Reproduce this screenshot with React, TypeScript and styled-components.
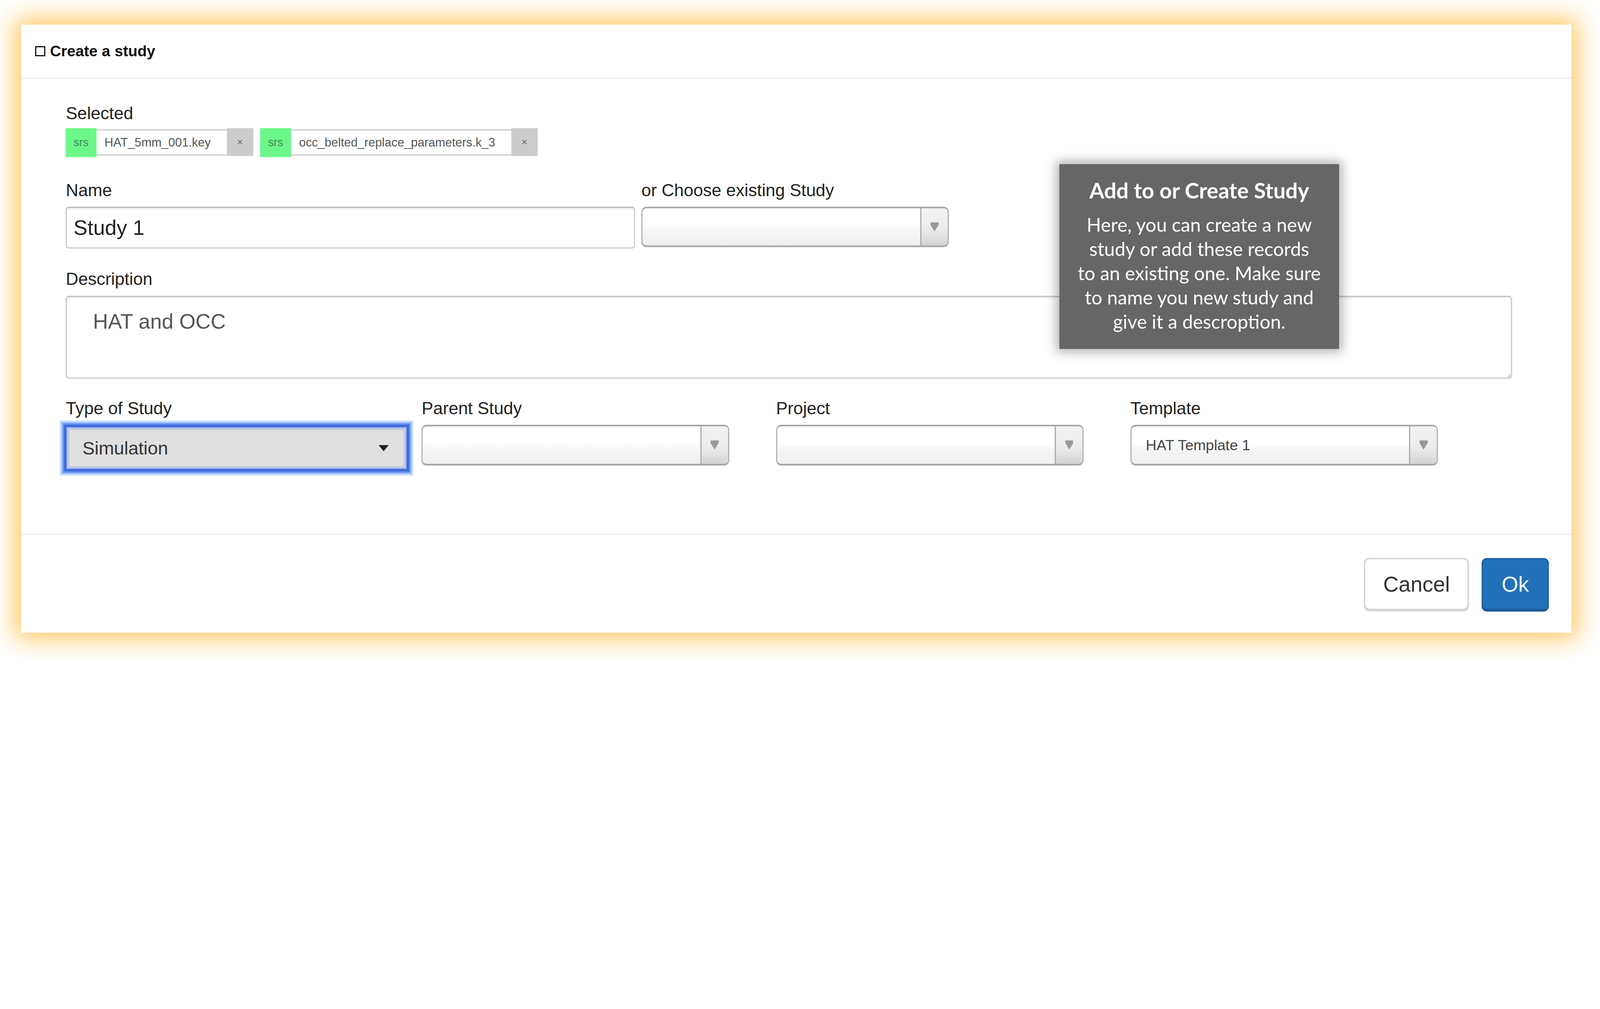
import styled, { createGlobalStyle } from "styled-components";

const GlobalStyle = createGlobalStyle`
  html, body {
    margin: 0;
    padding: 0;
    background: #fff;
    overflow: hidden;
  }
  body {
    font-family: "Liberation Sans", Arial, sans-serif;
    color: #333;
  }
  * {
    box-sizing: border-box;
  }
`;

// layout is written at the 1x size of the capture; the page is zoomed to fit the window
const BASE_WIDTH = 1569;
const BASE_HEIGHT = 645.5;

const Page = styled.div`
  width: ${BASE_WIDTH}px;
  height: ${BASE_HEIGHT}px;
  padding: 24px 0 0 20.5px;
  overflow: hidden;
`;

const Dialog = styled.section`
  position: relative;
  width: 1520.5px;
  height: 596px;
  background: #fff;
  box-shadow: 0 0 22px 6px #ffc965;
  display: flex;
  flex-direction: column;
`;

const Header = styled.header`
  height: 53px;
  flex-shrink: 0;
  padding-left: 14px;
  border-bottom: 1px solid #e5e5e5;
  display: flex;
  align-items: center;
  gap: 4.5px;
  font-size: 15px;
  font-weight: 700;
  color: #111;
`;

const IconBox = styled.span`
  width: 10px;
  height: 10px;
  border: 1.5px solid #111;
`;

const Body = styled.div`
  flex: 1;
  padding: 24px 58px 0 44px;
  border-bottom: 1px solid #e5e5e5;
  display: flex;
  flex-direction: column;
`;

const Label = styled.label`
  display: block;
  font-size: 17px;
  line-height: 20px;
  color: #222;
`;

const Tags = styled.div`
  margin-top: 4.5px;
  display: flex;
  gap: 6.5px;
`;

const Tag = styled.div`
  display: flex;
  align-items: center;
  height: 28.5px;
`;

const TagKind = styled.span`
  width: 30px;
  height: 28.5px;
  background: #6cf889;
  color: #3f8a52;
  font-size: 11px;
  display: flex;
  align-items: center;
  justify-content: center;
`;

const TagName = styled.span`
  height: 25.7px;
  padding: 0 16px 0 8px;
  border-top: 1.25px solid #ccc;
  border-bottom: 1.25px solid #ccc;
  font-size: 11.9px;
  color: #555;
  display: flex;
  align-items: center;
`;

const TagRemove = styled.span`
  align-self: flex-start;
  width: 26px;
  height: 27.5px;
  background: #ccc;
  border-right: 1px solid #d6d6d6;
  color: #666;
  font-size: 10px;
  display: flex;
  align-items: center;
  justify-content: center;
`;

const Row = styled.div<{ $top: number }>`
  margin-top: ${p => p.$top}px;
  display: flex;
  gap: 6px;
`;

const Field = styled.div`
  display: flex;
  flex-direction: column;
  gap: 6.2px;
`;

const TextInput = styled.input`
  width: 558.5px;
  height: 41px;
  padding: 0 6.5px;
  border: 1.25px solid #ccc;
  border-top-color: #b5b5b5;
  border-radius: 3px;
  box-shadow: inset 0 1.5px 1px rgba(0, 0, 0, 0.06);
  font-family: "Liberation Sans", Arial, sans-serif;
  font-size: 20.5px;
  color: #222;
  outline: none;
`;

const TextArea = styled.textarea`
  width: 1418.5px;
  height: 81.5px;
  padding: 12.5px 25.5px;
  border: 1.25px solid #ccc;
  border-top-color: #c0c0c0;
  border-radius: 3px;
  box-shadow: inset 0 1.5px 1px rgba(0, 0, 0, 0.05);
  font-family: "Liberation Sans", Arial, sans-serif;
  font-size: 20.5px;
  color: #555;
  outline: none;
`;

const Grid = styled.div`
  margin-top: 19px;
  display: grid;
  grid-template-columns: 349px 347.5px 347.5px 347.5px;
`;

const ChosenSelect = styled.div`
  width: 301.5px;
  height: 39.5px;
  border: 1.25px solid #b4b4b4;
  border-top: 1.75px solid #a6a6a6;
  border-bottom: 1.75px solid #a6a6a6;
  border-radius: 5px;
  background: linear-gradient(#fff 0%, #fff 45%, #f6f6f6 60%, #efefef 100%);
  box-shadow: 0 0.5px 1px rgba(0, 0, 0, 0.08);
  display: flex;
  align-items: stretch;
  overflow: hidden;
`;

const ChosenValue = styled.span`
  flex: 1;
  padding-left: 14px;
  font-size: 14.5px;
  color: #444;
  display: flex;
  align-items: center;
`;

const ChosenArrow = styled.span`
  width: 27px;
  border-left: 1.25px solid #aaa;
  background: linear-gradient(#f2f2f2 0%, #ececec 55%, #d4d4d4 100%);
  display: flex;
  align-items: center;
  justify-content: center;
`;

const NativeSelect = styled.div`
  margin-left: -1.5px;
  width: 338px;
  height: 45.5px;
  padding: 0 17.5px 0 15.5px;
  border: 2.5px solid #3c6bd6;
  background: #e0e0e0;
  box-shadow:
    inset 0 0 0 1px #98adee,
    inset 0 0 0 3px #c3cbe3,
    0 0 0 1.5px #6690f6,
    0 0 0 3px #a7c3fb,
    0 0 0 4.5px #dde7fd;
  font-size: 18px;
  color: #333;
  display: flex;
  align-items: center;
  justify-content: space-between;
`;

const Footer = styled.footer`
  height: 96px;
  flex-shrink: 0;
  padding: 23px 22px 0 0;
  display: flex;
  align-items: flex-start;
  justify-content: flex-end;
  gap: 12.5px;
`;

const Button = styled.button<{ $primary?: boolean }>`
  height: 51px;
  padding: 0 ${p => (p.$primary ? 18.5 : 17.5)}px;
  border: 1.25px solid ${p => (p.$primary ? "#1b5e9c" : "#ccc")};
  border-radius: 5px;
  background: ${p => (p.$primary ? "#2071b9" : "#fff")};
  box-shadow: 0 1.5px 0 ${p => (p.$primary ? "#1a5a94" : "#ddd")};
  color: ${p => (p.$primary ? "#fff" : "#333")};
  font-family: "Liberation Sans", Arial, sans-serif;
  font-size: 21px;
`;

const Tooltip = styled.aside`
  position: absolute;
  left: 1018.5px;
  top: 137px;
  width: 274px;
  height: 181px;
  padding-top: 13.5px;
  background: #666;
  box-shadow: 0 0 10px 3px rgba(0, 0, 0, 0.3);
  color: #fff;
  font-family: Lato, "Open Sans", sans-serif;
  text-align: center;
  white-space: nowrap;
`;

const TooltipTitle = styled.h3`
  margin: 0 0 9.5px;
  font-size: 21.2px;
  line-height: 24px;
  font-weight: 700;
`;

const TooltipText = styled.p`
  margin: 0;
  font-size: 18.6px;
  line-height: 23.75px;
`;

const ChosenTriangle = () => (
  <svg width="8" height="9" viewBox="0 0 8 9">
    <path d="M0 0 H8 V2.5 L4 9 L0 2.5 Z" fill="#999" />
  </svg>
);

const Caret = () => (
  <svg width="10" height="6" viewBox="0 0 10 6">
    <polygon points="0,0 10,0 5,6" fill="#222" />
  </svg>
);

const selected = [
  { kind: "srs", name: "HAT_5mm_001.key" },
  { kind: "srs", name: "occ_belted_replace_parameters.k_3" },
];

const studyFields = [
  { label: "Type of Study", value: "Simulation", native: true },
  { label: "Parent Study", value: "" },
  { label: "Project", value: "" },
  { label: "Template", value: "HAT Template 1" },
];

export default function App() {
  const scale =
    typeof window !== "undefined"
      ? Math.min(window.innerWidth / BASE_WIDTH, window.innerHeight / BASE_HEIGHT)
      : 4;

  return (
    <Page style={{ zoom: scale }}>
      <GlobalStyle />
      <Dialog>
        <Header>
          <IconBox />
          Create a study
        </Header>
        <Body>
          <Label>Selected</Label>
          <Tags>
            {selected.map(item => (
              <Tag key={item.name}>
                <TagKind>{item.kind}</TagKind>
                <TagName>{item.name}</TagName>
                <TagRemove>×</TagRemove>
              </Tag>
            ))}
          </Tags>

          <Row $top={22.5}>
            <Field>
              <Label>Name</Label>
              <TextInput defaultValue="Study 1" />
            </Field>
            <Field>
              <Label>or Choose existing Study</Label>
              <ChosenSelect>
                <ChosenValue />
                <ChosenArrow>
                  <ChosenTriangle />
                </ChosenArrow>
              </ChosenSelect>
            </Field>
          </Row>

          <Row $top={20}>
            <Field>
              <Label>Description</Label>
              <TextArea defaultValue="HAT and OCC" />
            </Field>
          </Row>

          <Grid>
            {studyFields.map(f => (
              <Field key={f.label}>
                <Label>{f.label}</Label>
                {f.native ? (
                  <NativeSelect>
                    {f.value}
                    <Caret />
                  </NativeSelect>
                ) : (
                  <ChosenSelect>
                    <ChosenValue>{f.value}</ChosenValue>
                    <ChosenArrow>
                      <ChosenTriangle />
                    </ChosenArrow>
                  </ChosenSelect>
                )}
              </Field>
            ))}
          </Grid>
        </Body>
        <Footer>
          <Button>Cancel</Button>
          <Button $primary>Ok</Button>
        </Footer>

        <Tooltip>
          <TooltipTitle>Add to or Create Study</TooltipTitle>
          <TooltipText>
            Here, you can create a new
            <br />
            study or add these records
            <br />
            to an existing one. Make sure
            <br />
            to name you new study and
            <br />
            give it a descroption.
          </TooltipText>
        </Tooltip>
      </Dialog>
    </Page>
  );
}
